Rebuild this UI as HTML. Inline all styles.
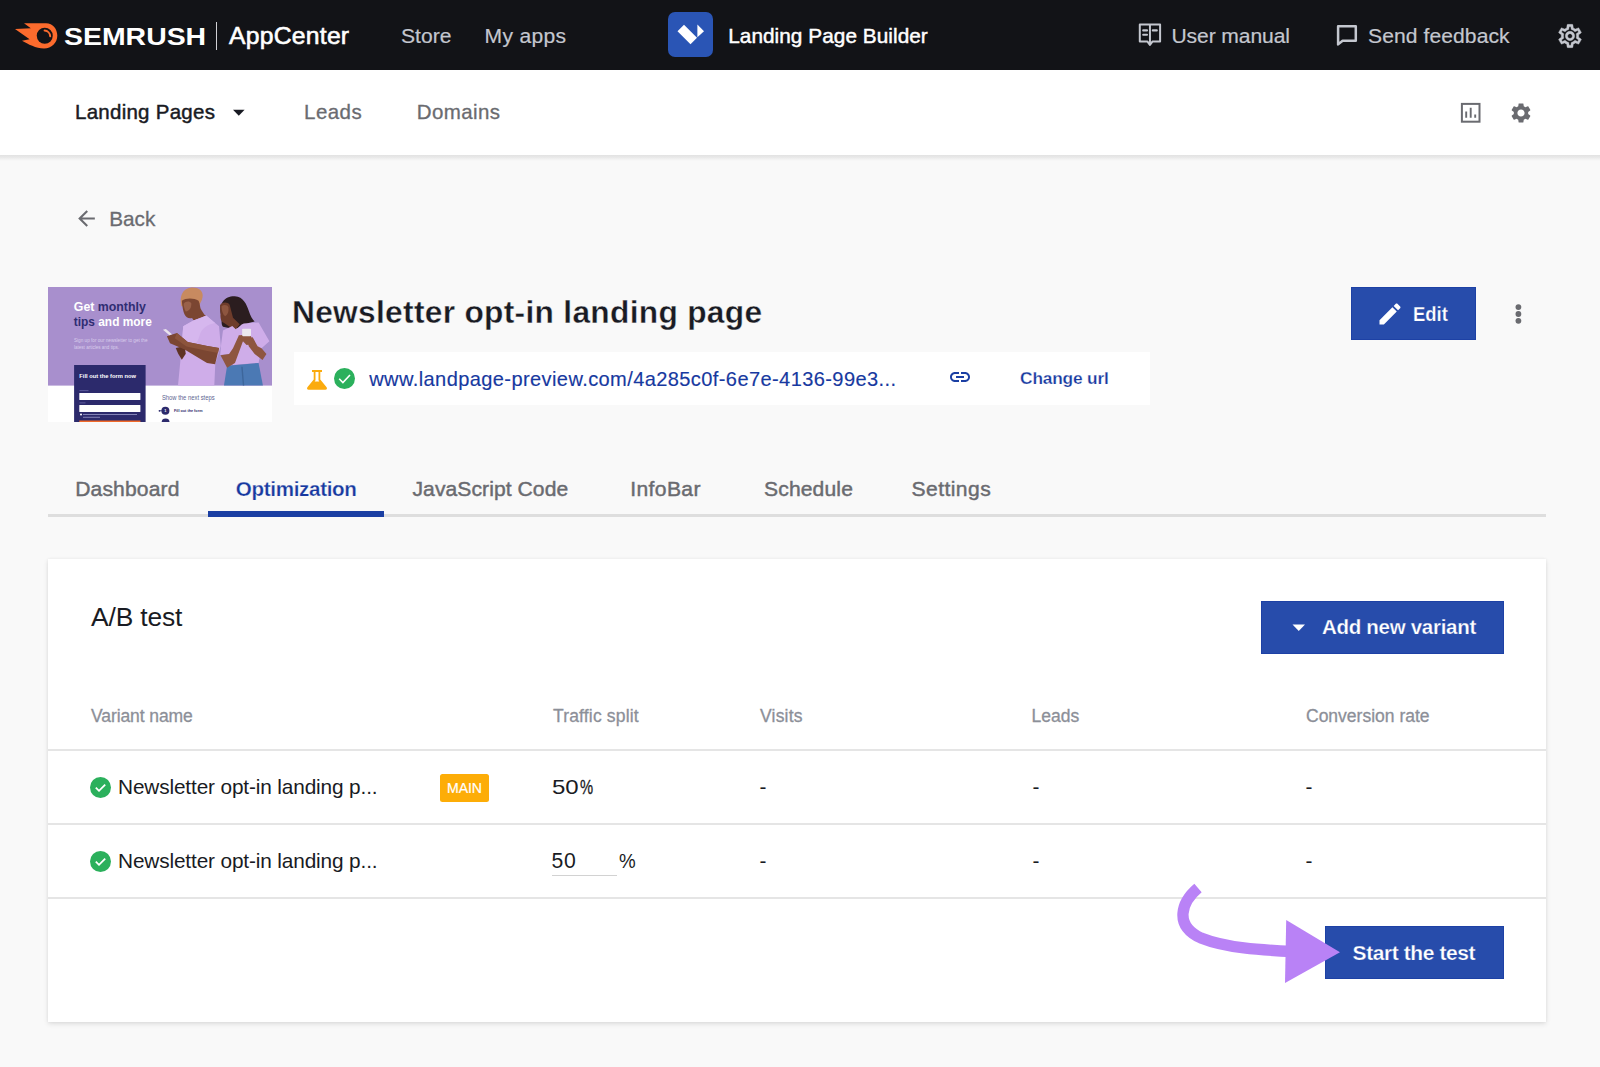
<!DOCTYPE html>
<html lang="en"><head><meta charset="utf-8"><title>Landing Page Builder</title>
<style>
*{box-sizing:border-box;margin:0;padding:0}
html,body{width:1600px;height:1067px;overflow:hidden;background:#f9f9f9;font-family:"Liberation Sans",sans-serif}
.a{position:absolute}
.t{position:absolute;white-space:nowrap;line-height:1;font-family:"Liberation Sans",sans-serif}
svg{position:absolute;overflow:visible}
</style></head><body>
<!-- top bar -->
<div class="a" style="left:0;top:0;width:1600px;height:70px;background:#121317"></div>
<!-- subnav -->
<div class="a" style="left:0;top:155px;width:1600px;height:6px;background:linear-gradient(#e2e2e2,#e9e9e9 40%,#f3f3f3 75%,#f9f9f9)"></div>
<div class="a" style="left:0;top:70px;width:1600px;height:85px;background:#fff"></div>
<!-- url box -->
<div class="a" style="left:293.500px;top:352px;width:856.700px;height:52.600px;background:#fff"></div>
<!-- edit btn -->
<div class="a" style="left:1351.300px;top:287.400px;width:124.700px;height:53px;background:#274cab;border:1px solid #1d41a5"></div>
<!-- tabs line -->
<div class="a" style="left:48px;top:514px;width:1498px;height:2.700px;background:#dedede"></div>
<div class="a" style="left:207.500px;top:511.200px;width:176.500px;height:5.600px;background:#1b3fa3"></div>
<!-- card -->
<div class="a" style="left:48px;top:559px;width:1498px;height:462.500px;background:#fff;box-shadow:0 2px 5px rgba(0,0,0,.11),0 0 3px rgba(0,0,0,.05)"></div>
<div class="a" style="left:1260.700px;top:601px;width:243.300px;height:52.500px;background:#274cab;border:1px solid #1d41a5"></div>
<div class="a" style="left:48px;top:749px;width:1498px;height:2px;background:#e5e5e5"></div>
<div class="a" style="left:48px;top:823px;width:1498px;height:2px;background:#e5e5e5"></div>
<div class="a" style="left:48px;top:897px;width:1498px;height:2px;background:#e5e5e5"></div>
<div class="a" style="left:440.100px;top:774.200px;width:49px;height:28.100px;background:#fdad07;border-radius:2.500px"></div>
<div class="a" style="left:552px;top:874.700px;width:64.900px;height:1.300px;background:#d2d2d2"></div>
<div class="a" style="left:1325.300px;top:926.200px;width:178.800px;height:52.600px;background:#274cab;border:1px solid #1d41a5"></div>
<!--THUMB_START-->
<!-- thumbnail -->
<svg style="left:48px;top:287px" width="224" height="135" viewBox="48 287 224 135">
<defs><clipPath id="tc"><rect x="48" y="287" width="224" height="135"/></clipPath></defs>
<g clip-path="url(#tc)">
<rect x="48" y="287" width="224" height="135" fill="#fff"/>
<rect x="48" y="287" width="224" height="98.600" fill="#a88fcd"/>
<!-- people -->
<g transform="translate(160 285) scale(0.09838)">
<!-- man -->
<path d="M218,215 C195,120 225,35 320,26 C405,22 445,75 432,125 C426,165 405,185 398,215 Z" fill="#c88a60"/>
<path d="M222,160 C262,128 345,128 392,160 C412,200 402,232 422,256 L452,302 L470,312 L342,362 L326,336 C292,346 264,330 250,300 C236,268 226,222 222,160 Z" fill="#7b4632"/>
<path d="M240,190 C260,165 300,160 318,185 C322,230 300,262 262,270 C248,245 242,220 240,190 Z" fill="#99614a"/>
<path d="M340,362 L470,310 L600,420 L618,620 L562,800 L552,1022 L183,1022 L214,700 L236,420 Z" fill="#cfade9"/>
<path d="M236,420 L340,362 L420,335 L470,310 L560,385 C480,400 420,440 400,520 C380,600 330,640 225,560 Z" fill="#d6b7ee"/>
<path d="M160,640 L250,620 L262,700 L222,760 L185,700 Z" fill="#5f3324"/>
<path d="M600,640 L560,805 L478,792 L250,655 L102,592 L70,520 L172,488 L282,580 L480,620 Z" fill="#7b4632"/>
<path d="M172,488 L282,580 L480,620 L600,640 L590,690 L470,668 L270,625 L150,540 Z" fill="#8c543c"/>
<path d="M30,455 L60,448 L122,500 L96,512 Z" fill="#e9e3ec"/>
<!-- woman -->
<path d="M622,305 C590,190 660,112 760,115 C850,120 880,200 902,262 C920,320 940,350 962,372 L900,385 L820,440 L700,438 L640,425 C615,390 635,350 622,305 Z" fill="#2b1d1f"/>
<path d="M610,205 C630,170 690,170 708,200 L742,332 L810,400 L770,450 L700,420 L652,385 C622,380 612,340 615,290 Z" fill="#6e3c2b"/>
<path d="M625,215 C650,195 685,200 695,225 C702,265 690,300 662,318 C640,300 625,260 625,215 Z" fill="#8e5640"/>
<path d="M640,462 L735,418 L772,452 L830,402 L852,392 L1002,380 L1112,572 L1032,642 L1002,792 L742,812 L702,702 L612,712 L622,600 Z" fill="#cfade9"/>
<path d="M682,822 L1002,792 L1046,1022 L650,1022 Z" fill="#4b79b4"/>
<path d="M840,830 L856,1022 L842,1022 L826,830 Z" fill="#3d669b"/>
<path d="M615,715 L682,842 L762,792 L832,602 L862,522 L802,512 L742,642 L702,702 Z" fill="#8e5640"/>
<path d="M1032,642 L1082,702 L1042,762 L962,702 L902,622 L882,542 L942,532 L992,622 Z" fill="#8e5640"/>
<path d="M800,515 L870,500 L925,520 L945,600 L880,610 L840,570 Z" fill="#8e5640"/>
<rect x="835" y="445" width="90" height="75" rx="8" fill="#ece8ef"/>
</g>
<!-- form -->
<rect x="74.100" y="365" width="71.500" height="60" fill="#2c2a6c"/>
<rect x="79.300" y="393" width="61.100" height="7" rx="0.600" fill="#fff"/>
<rect x="79.300" y="405" width="61.100" height="7" rx="0.600" fill="#fff"/>
<rect x="79.300" y="420.500" width="61.100" height="3" fill="#f26a2a"/>
<circle cx="81" cy="414.600" r="1" fill="#fff"/>
<rect x="83" y="414" width="54" height="0.900" fill="#8f8fc0"/>
<rect x="83" y="416.800" width="17" height="0.900" fill="#8f8fc0"/>
<rect x="79.500" y="390.300" width="9" height="0.800" fill="#6a68a8"/>
<rect x="79.500" y="402.500" width="6" height="0.800" fill="#6a68a8"/>
<!-- steps -->
<circle cx="165.400" cy="410.800" r="4" fill="#2c2a6c"/>
<circle cx="159.500" cy="410.800" r="0.900" fill="#2c2a6c"/><rect x="159.500" y="410.400" width="3" height="0.800" fill="#2c2a6c"/>
<circle cx="165.600" cy="422.600" r="4" fill="#2c2a6c"/>
<g font-family="'Liberation Sans',sans-serif">
<text x="73.800" y="310.500" font-size="12.600" font-weight="700" fill="#fff" textLength="72" lengthAdjust="spacingAndGlyphs">Get <tspan fill="#2f2d72">monthly</tspan></text>
<text x="73.800" y="326" font-size="12.600" font-weight="700" fill="#2f2d72" textLength="78" lengthAdjust="spacingAndGlyphs">tips <tspan fill="#fff">and more</tspan></text>
<text x="74" y="342" font-size="4.700" fill="#d9cdec" textLength="73.500" lengthAdjust="spacingAndGlyphs">Sign up for our newsletter to get the</text>
<text x="74" y="348.600" font-size="4.700" fill="#d9cdec" textLength="45" lengthAdjust="spacingAndGlyphs">latest articles and tips.</text>
<text x="79.300" y="378.400" font-size="5.900" font-weight="700" fill="#fff" textLength="56.600" lengthAdjust="spacingAndGlyphs">Fill out the form now</text>
<text x="161.900" y="400.200" font-size="6.300" fill="#5b6490" textLength="52.800" lengthAdjust="spacingAndGlyphs">Show the next steps</text>
<text x="164.300" y="412.300" font-size="4" font-weight="700" fill="#fff">1</text>
<text x="174" y="412.300" font-size="3.900" font-weight="700" fill="#2c2a6c" textLength="28.500" lengthAdjust="spacingAndGlyphs">Fill out the form</text>
</g>
</g>
</svg>
<!--THUMB_END-->
<!--ICONS_START-->
<!-- semrush logo -->
<svg style="left:0;top:0" width="70" height="70" viewBox="0 0 70 70">
<path d="M24,23.2 L46,23.2 C53,23.2 57.3,29 57.3,35.6 C57.3,43 51.5,48.6 44,48.6 C36,48.6 28,44 22,40.8 L29.6,39.3 L15,29 L30.8,28.3 Z" fill="#fc6b2d"/>
<circle cx="44.75" cy="35.75" r="8" fill="#121317"/>
<path d="M44.6,30.6 C47.6,30.8 50,33.2 50.2,36.2" fill="none" stroke="#fc6b2d" stroke-width="2" stroke-linecap="round"/>
</svg>
<div class="a" style="left:215.5px;top:22px;width:1.5px;height:27.5px;background:#d0d0d4"></div>
<!-- app icon -->
<div class="a" style="left:667.5px;top:12px;width:45px;height:45px;border-radius:7px;background:#2a55b5"></div>
<svg style="left:667.5px;top:12px" width="45" height="45" viewBox="0 0 45 45">
<path d="M9.5,19.2 L16,12.7 L29,25.7 L22.5,32.2 Z" fill="#fff"/>
<path d="M29.4,12.6 L36,19.2 L29.4,25.2 Z" fill="#fff"/>
</svg>
<!-- book icon -->
<svg style="left:1130px;top:15px" width="40" height="40" viewBox="1130 15 40 40" fill="none" stroke="#c4c7cf" stroke-width="2">
<path d="M1139.800,24.400 H1160.100 V41.600 H1152.400 L1149.950,45 L1147.500,41.600 H1139.800 Z" stroke-linejoin="round"/>
<path d="M1149.950,24.400 V44"/>
<path d="M1143.200,30.400 H1147 M1143.200,34.700 H1147 M1152.800,30.400 H1156.800" stroke-width="2.100" stroke-linecap="round"/>
</svg>
<!-- chat icon -->
<svg style="left:1325px;top:15px" width="40" height="40" viewBox="1325 15 40 40" fill="none" stroke="#c4c7cf" stroke-width="2.500" stroke-linejoin="round">
<path d="M1338.100,44.400 V26.200 H1355.800 V40.700 H1342.600 Z"/>
</svg>
<!-- gear outline -->
<svg style="left:1555.700px;top:22.400px" width="28" height="28" viewBox="0 0 24 24" fill="#c4c7cf" stroke="#c4c7cf" stroke-width="0.300">
<path d="M19.43 12.98c.04-.32.07-.64.07-.98 0-.34-.03-.66-.07-.98l2.11-1.65c.19-.15.24-.42.12-.64l-2-3.46c-.09-.16-.26-.25-.44-.25-.06 0-.12.01-.17.03l-2.49 1c-.52-.4-1.08-.73-1.69-.98l-.38-2.65C14.46 2.18 14.25 2 14 2h-4c-.25 0-.46.18-.49.42l-.38 2.65c-.61.25-1.17.59-1.69.98l-2.49-1c-.06-.02-.12-.03-.18-.03-.17 0-.34.09-.43.25l-2 3.46c-.13.22-.07.49.12.64l2.11 1.65c-.04.32-.07.65-.07.98 0 .33.03.66.07.98l-2.11 1.65c-.19.15-.24.42-.12.64l2 3.46c.09.16.26.25.44.25.06 0 .12-.01.17-.03l2.49-1c.52.4 1.08.73 1.69.98l.38 2.65c.03.24.24.42.49.42h4c.25 0 .46-.18.49-.42l.38-2.65c.61-.25 1.17-.59 1.69-.98l2.49 1c.06.02.12.03.18.03.17 0 .34-.09.43-.25l2-3.46c.12-.22.07-.49-.12-.64l-2.11-1.65zm-1.98-1.71c.04.31.05.52.05.73 0 .21-.02.43-.05.73l-.14 1.13.89.7 1.08.84-.7 1.21-1.27-.51-1.04-.42-.9.68c-.43.32-.84.56-1.25.73l-1.06.43-.16 1.13-.2 1.35h-1.4l-.19-1.35-.16-1.13-1.06-.43c-.43-.18-.83-.41-1.23-.71l-.91-.7-1.06.43-1.27.51-.7-1.21 1.08-.84.89-.7-.14-1.13c-.03-.31-.05-.54-.05-.74s.02-.43.05-.73l.14-1.13-.89-.7-1.08-.84.7-1.21 1.27.51 1.04.42.9-.68c.43-.32.84-.56 1.25-.73l1.06-.43.16-1.13.2-1.35h1.39l.19 1.35.16 1.13 1.06.43c.43.18.83.41 1.23.71l.91.7 1.06-.43 1.27-.51.7 1.21-1.07.85-.89.7.14 1.13zM12 8c-2.21 0-4 1.79-4 4s1.790 4 4 4 4-1.790 4-4-1.790-4-4-4zm0 6c-1.100 0-2-.9-2-2s.9-2 2-2 2 .9 2 2-.9 2-2 2z"/>
</svg>
<!-- landing pages caret -->
<svg style="left:232px;top:108.5px" width="14" height="8" viewBox="0 0 14 8"><path d="M1,0.8 H12.6 L6.8,6.8 Z" fill="#191b23"/></svg>
<!-- chart icon -->
<svg style="left:1460px;top:102px" width="22" height="22" viewBox="0 0 22 22" fill="none" stroke="#6a6b70">
<rect x="1.9" y="1.9" width="17.6" height="17.8" stroke-width="2"/>
<path d="M6.2,9.6 V15.8 M10.7,5.8 V15.8 M15.2,12.4 V15.8" stroke-width="1.9"/>
</svg>
<!-- gear filled -->
<svg style="left:1509px;top:100.6px" width="24" height="24" viewBox="0 0 24 24" fill="#6a6b70">
<path d="M19.14 12.94c.04-.3.06-.61.06-.94 0-.32-.02-.64-.07-.94l2.030-1.580c.18-.14.23-.41.12-.61l-1.920-3.320c-.12-.22-.37-.29-.59-.22l-2.390.96c-.5-.38-1.030-.7-1.620-.94l-.36-2.540c-.04-.24-.24-.41-.48-.41h-3.840c-.24 0-.43.17-.47.41l-.36 2.540c-.59.24-1.130.57-1.620.94l-2.390-.96c-.22-.08-.47 0-.59.22L2.740 8.870c-.12.21-.08.47.12.61l2.030 1.580c-.05.3-.09.63-.09.94s.02.64.07.94l-2.030 1.580c-.18.14-.23.41-.12.61l1.920 3.320c.12.22.37.29.59.22l2.390-.96c.5.38 1.030.7 1.620.94l.36 2.540c.05.24.24.41.48.41h3.840c.24 0 .44-.17.47-.41l.36-2.540c.59-.24 1.130-.56 1.620-.94l2.390.96c.22.08.47 0 .59-.22l1.920-3.320c.12-.22.07-.47-.12-.61l-2.010-1.580zM12 15.600c-1.980 0-3.600-1.620-3.600-3.600s1.620-3.600 3.600-3.600 3.600 1.620 3.600 3.600-1.620 3.600-3.600 3.600z"/>
</svg>
<!-- back arrow -->
<svg style="left:73.700px;top:206.200px" width="25" height="25" viewBox="0 0 24 24" fill="#6a6b70"><path d="M20 11H7.830l5.590-5.590L12 4l-8 8 8 8 1.410-1.410L7.830 13H20v-2z"/></svg>
<!-- flask -->
<svg style="left:300px;top:365px" width="32" height="30" viewBox="300 365 32 30">
<path d="M312,370 H322 V372 H320.300 V379.500 L326.600,387.200 C327.400,388.400 326.800,389.800 325.400,389.800 H308.600 C307.200,389.800 306.600,388.400 307.400,387.200 L313.700,379.500 V372 H312 Z" fill="#fbab0d"/>
<path d="M315.500,372 H318.500 V380.300 L319.300,381.400 H314.700 L315.500,380.300 Z" fill="#fff"/>
</svg>
<!-- check circle url -->
<svg style="left:333.700px;top:367.800px" width="21" height="21" viewBox="0 0 21 21"><circle cx="10.500" cy="10.500" r="10.500" fill="#2bb05c"/><path d="M5.200,10.800 L8.900,14.500 L16,7" fill="none" stroke="#fff" stroke-width="1.600"/></svg>
<!-- link icon -->
<svg style="left:948.200px;top:365.200px" width="24" height="24" viewBox="0 0 24 24" fill="#1b3fa3"><path d="M3.900 12c0-1.710 1.390-3.100 3.100-3.100h4V7H7c-2.760 0-5 2.240-5 5s2.240 5 5 5h4v-1.900H7c-1.710 0-3.100-1.390-3.100-3.100zM8 13h8v-2H8v2zm9-6h-4v1.900h4c1.710 0 3.100 1.390 3.100 3.100s-1.390 3.100-3.100 3.100h-4V17h4c2.760 0 5-2.240 5-5s-2.240-5-5-5z"/></svg>
<!-- pencil -->
<svg style="left:1375.500px;top:300.200px" width="28" height="28" viewBox="0 0 24 24" fill="#fff"><path d="M3 17.250V21h3.750L17.810 9.940l-3.750-3.750L3 17.250zM20.710 7.040c.39-.39.39-1.020 0-1.410l-2.340-2.340c-.39-.39-1.020-.39-1.410 0l-1.830 1.830 3.750 3.750 1.830-1.830z"/></svg>
<!-- kebab -->
<svg style="left:1512px;top:302px" width="12" height="24" viewBox="0 0 12 24" fill="#6a6b70"><circle cx="6.4" cy="5.1" r="2.9"/><circle cx="6.4" cy="12" r="2.9"/><circle cx="6.4" cy="18.85" r="2.9"/></svg>
<!-- add new caret -->
<svg style="left:1292px;top:623.500px" width="14" height="8" viewBox="0 0 14 8"><path d="M0.500,0.500 H13 L6.750,7 Z" fill="#fff"/></svg>
<!-- row checks -->
<svg style="left:90px;top:776.500px" width="21" height="21" viewBox="0 0 21 21"><circle cx="10.500" cy="10.500" r="10.500" fill="#2bb05c"/><path d="M5.800,10.700 L9,13.800 L15.200,7.600" fill="none" stroke="#fff" stroke-width="1.800"/></svg>
<svg style="left:90px;top:850.500px" width="21" height="21" viewBox="0 0 21 21"><circle cx="10.500" cy="10.500" r="10.500" fill="#2bb05c"/><path d="M5.800,10.700 L9,13.800 L15.200,7.600" fill="none" stroke="#fff" stroke-width="1.800"/></svg>
<!-- purple arrow -->
<svg style="left:0;top:0" width="1600" height="1067" viewBox="0 0 1600 1067">
<path d="M1198,888 C1181.500,902 1173.500,925 1201,938 C1226,948 1260,950 1292,951.500" fill="none" stroke="#b982f6" stroke-width="11.300"/>
<path d="M1286.200,920 L1340,952.200 L1285,983 Z" fill="#b982f6"/>
</svg>
<!--ICONS_END-->
<div class="t" style="left:63.50px;top:25.33px;font-size:24.71px;letter-spacing:0.000px;color:#ffffff;font-weight:700;transform:scaleX(1.1507);transform-origin:0 0;">SEMRUSH</div>
<div class="t" style="left:229.00px;top:23.58px;font-size:24.71px;letter-spacing:0.250px;color:#ffffff;font-weight:400;-webkit-text-stroke:0.6px #ffffff;">AppCenter</div>
<div class="t" style="left:401.00px;top:25.16px;font-size:21.08px;letter-spacing:0.000px;color:#c4c7cf;font-weight:400;-webkit-text-stroke:0.2px #c4c7cf;">Store</div>
<div class="t" style="left:484.50px;top:25.16px;font-size:21.08px;letter-spacing:0.333px;color:#c4c7cf;font-weight:400;-webkit-text-stroke:0.2px #c4c7cf;">My apps</div>
<div class="t" style="left:728.20px;top:26.48px;font-size:20.78px;letter-spacing:0.053px;color:#ffffff;font-weight:400;-webkit-text-stroke:0.45px #ffffff;">Landing Page Builder</div>
<div class="t" style="left:1171.50px;top:25.36px;font-size:21.08px;letter-spacing:-0.100px;color:#c4c7cf;font-weight:400;-webkit-text-stroke:0.2px #c4c7cf;">User manual</div>
<div class="t" style="left:1368.00px;top:25.36px;font-size:21.08px;letter-spacing:0.083px;color:#c4c7cf;font-weight:400;-webkit-text-stroke:0.2px #c4c7cf;">Send feedback</div>
<div class="t" style="left:75.00px;top:102.22px;font-size:20.49px;letter-spacing:0.267px;color:#191b23;font-weight:400;-webkit-text-stroke:0.45px #191b23;">Landing Pages</div>
<div class="t" style="left:304.10px;top:102.22px;font-size:20.49px;letter-spacing:0.450px;color:#6a6b70;font-weight:400;-webkit-text-stroke:0.3px #6a6b70;">Leads</div>
<div class="t" style="left:416.80px;top:102.22px;font-size:20.49px;letter-spacing:0.400px;color:#6a6b70;font-weight:400;-webkit-text-stroke:0.3px #6a6b70;">Domains</div>
<div class="t" style="left:109.20px;top:209.38px;font-size:20.78px;letter-spacing:0.000px;color:#6a6b70;font-weight:400;-webkit-text-stroke:0.3px #6a6b70;">Back</div>
<div class="t" style="left:292.00px;top:297.28px;font-size:31.69px;letter-spacing:0.303px;color:#191b23;font-weight:700;-webkit-text-stroke:0.35px #f9f9f9;">Newsletter opt-in landing page</div>
<div class="t" style="left:369.25px;top:368.71px;font-size:20.06px;letter-spacing:0.394px;color:#1739a0;font-weight:400;-webkit-text-stroke:0.15px #1739a0;">www.landpage-preview.com/4a285c0f-6e7e-4136-99e3...</div>
<div class="t" style="left:1020.10px;top:369.66px;font-size:17.30px;letter-spacing:-0.178px;color:#1739a0;font-weight:700;-webkit-text-stroke:0.25px #ffffff;">Change url</div>
<div class="t" style="left:1413.00px;top:304.35px;font-size:20.49px;letter-spacing:0.000px;color:#ffffff;font-weight:700;-webkit-text-stroke:0.25px #274cab;transform:scaleX(0.9000);transform-origin:0 0;">Edit</div>
<div class="t" style="left:75.25px;top:477.91px;font-size:21.08px;letter-spacing:0.125px;color:#6a6b70;font-weight:400;-webkit-text-stroke:0.45px #6a6b70;">Dashboard</div>
<div class="t" style="left:235.75px;top:479.31px;font-size:20.60px;letter-spacing:-0.318px;color:#1739a0;font-weight:700;-webkit-text-stroke:0.25px #f9f9f9;">Optimization</div>
<div class="t" style="left:412.50px;top:477.91px;font-size:21.08px;letter-spacing:0.071px;color:#6a6b70;font-weight:400;-webkit-text-stroke:0.45px #6a6b70;">JavaScript Code</div>
<div class="t" style="left:630.30px;top:477.91px;font-size:21.08px;letter-spacing:0.367px;color:#6a6b70;font-weight:400;-webkit-text-stroke:0.45px #6a6b70;">InfoBar</div>
<div class="t" style="left:764.00px;top:477.91px;font-size:21.08px;letter-spacing:0.143px;color:#6a6b70;font-weight:400;-webkit-text-stroke:0.45px #6a6b70;">Schedule</div>
<div class="t" style="left:911.50px;top:477.91px;font-size:21.08px;letter-spacing:0.429px;color:#6a6b70;font-weight:400;-webkit-text-stroke:0.45px #6a6b70;">Settings</div>
<div class="t" style="left:91.00px;top:604.15px;font-size:26.40px;letter-spacing:-0.143px;color:#191b23;font-weight:400;">A/B test</div>
<div class="t" style="left:1322.00px;top:617.35px;font-size:20.49px;letter-spacing:-0.286px;color:#ffffff;font-weight:700;-webkit-text-stroke:0.25px #274cab;">Add new variant</div>
<div class="t" style="left:91.00px;top:707.83px;font-size:17.50px;letter-spacing:-0.091px;color:#8c8f98;font-weight:400;-webkit-text-stroke:0.3px #8c8f98;">Variant name</div>
<div class="t" style="left:553.00px;top:707.83px;font-size:17.50px;letter-spacing:0.167px;color:#8c8f98;font-weight:400;-webkit-text-stroke:0.3px #8c8f98;">Traffic split</div>
<div class="t" style="left:760.00px;top:707.83px;font-size:17.50px;letter-spacing:0.200px;color:#8c8f98;font-weight:400;-webkit-text-stroke:0.3px #8c8f98;">Visits</div>
<div class="t" style="left:1031.50px;top:707.83px;font-size:17.50px;letter-spacing:0.000px;color:#8c8f98;font-weight:400;-webkit-text-stroke:0.3px #8c8f98;">Leads</div>
<div class="t" style="left:1306.00px;top:707.83px;font-size:17.50px;letter-spacing:0.000px;color:#8c8f98;font-weight:400;-webkit-text-stroke:0.3px #8c8f98;">Conversion rate</div>
<div class="t" style="left:118.00px;top:777.44px;font-size:20.80px;letter-spacing:-0.138px;color:#191b23;font-weight:400;">Newsletter opt-in landing p...</div>
<div class="t" style="left:447.00px;top:781.49px;font-size:14.10px;letter-spacing:-0.067px;color:#ffffff;font-weight:400;-webkit-text-stroke:0.2px #ffffff;">MAIN</div>
<div class="t" style="left:552.40px;top:777.44px;font-size:20.80px;letter-spacing:0.000px;color:#191b23;font-weight:400;transform:scaleX(1.1557);transform-origin:0 0;">50</div>
<div class="t" style="left:579.80px;top:777.44px;font-size:20.80px;letter-spacing:0.000px;color:#191b23;font-weight:400;-webkit-text-stroke:0.3px #191b23;transform:scaleX(0.7087);transform-origin:0 0;">%</div>
<div class="t" style="left:759.50px;top:777.44px;font-size:20.80px;letter-spacing:0.000px;color:#191b23;font-weight:400;">-</div>
<div class="t" style="left:1032.50px;top:777.44px;font-size:20.80px;letter-spacing:0.000px;color:#191b23;font-weight:400;">-</div>
<div class="t" style="left:1305.50px;top:777.44px;font-size:20.80px;letter-spacing:0.000px;color:#191b23;font-weight:400;">-</div>
<div class="t" style="left:118.00px;top:851.44px;font-size:20.80px;letter-spacing:-0.138px;color:#191b23;font-weight:400;">Newsletter opt-in landing p...</div>
<div class="t" style="left:551.60px;top:850.10px;font-size:21.20px;letter-spacing:0.600px;color:#191b23;font-weight:400;">50</div>
<div class="t" style="left:618.60px;top:850.91px;font-size:20.30px;letter-spacing:0.000px;color:#191b23;font-weight:400;transform:scaleX(0.9246);transform-origin:0 0;">%</div>
<div class="t" style="left:759.50px;top:851.44px;font-size:20.80px;letter-spacing:0.000px;color:#191b23;font-weight:400;">-</div>
<div class="t" style="left:1032.50px;top:851.44px;font-size:20.80px;letter-spacing:0.000px;color:#191b23;font-weight:400;">-</div>
<div class="t" style="left:1305.50px;top:851.44px;font-size:20.80px;letter-spacing:0.000px;color:#191b23;font-weight:400;">-</div>
<div class="t" style="left:1352.60px;top:943.08px;font-size:20.93px;letter-spacing:-0.385px;color:#ffffff;font-weight:700;-webkit-text-stroke:0.25px #274cab;">Start the test</div>
</body></html>
